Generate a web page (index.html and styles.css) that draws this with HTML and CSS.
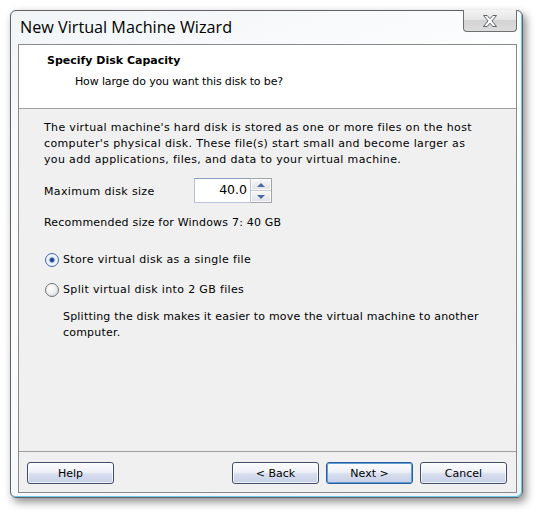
FILE: index.html
```html
<!DOCTYPE html>
<html>
<head>
<meta charset="utf-8">
<link rel="stylesheet" href="styles.css">
</head>
<body>
<div class="window">
  <div class="titlebar">
    <div class="title">New Virtual Machine Wizard</div>
    <div class="close">
      <svg width="18" height="14" viewBox="0 0 18 14">
        <path d="M2.5 1.5 L6.2 1.5 L9 4.7 L11.8 1.5 L15.5 1.5 L11 6.9 L15.5 12.5 L11.8 12.5 L9 9.2 L6.2 12.5 L2.5 12.5 L7 6.9 Z" fill="#fdfdfd" stroke="#5f6367" stroke-width="1" stroke-linejoin="round"/>
      </svg>
    </div>
  </div>
  <div class="panel">
    <div class="header">
      <div class="h-title">Specify Disk Capacity</div>
      <div class="h-sub">How large do you want this disk to be?</div>
    </div>
    <div class="body">
      <p class="intro">The virtual machine's hard disk is stored as one or more files on the host computer's physical disk. These file(s) start small and become larger as you add applications, files, and data to your virtual machine.</p>
      <div class="size-row">
        <div class="size-label">Maximum disk size (in GB):</div>
        <div class="spin">
          <div class="spin-input">40.0</div>
          <div class="spin-btns">
            <div class="spin-btn"><span class="tri-up"></span></div>
            <div class="spin-btn"><span class="tri-down"></span></div>
          </div>
        </div>
      </div>
      <div class="recommend">Recommended size for Windows 7: 40 GB</div>
      <div class="radio-row first"><span class="radio checked"></span>Store virtual disk as a single file</div>
      <div class="radio-row second"><span class="radio"></span>Split virtual disk into 2 GB files</div>
      <p class="desc">Splitting the disk makes it easier to move the virtual machine to another computer.</p>
    </div>
    <div class="footer">
      <button class="btn">Help</button>
      <div class="spacer"></div>
      <button class="btn">&lt; Back</button>
      <button class="btn default">Next &gt;</button>
      <button class="btn">Cancel</button>
    </div>
  </div>
</div>
</body>
</html>
```
FILE: styles.css
```css
html, body {
  margin: 0;
  padding: 0;
  background: #ffffff;
}
body {
  width: 543px;
  height: 518px;
  overflow: hidden;
  font-family: "DejaVu Sans", sans-serif;
  font-size: 11px;
  color: #000;
}
.window {
  margin: 10px 0 0 10px;
  width: 511px;
  height: 486px;
  border: 1px solid #5e6166;
  border-radius: 6px;
  background: linear-gradient(160deg, #f1f5f7 0%, #ffffff 40%, #eef3f6 100%);
  box-shadow: inset -1px -1px 0 #6cc8e6, 3px 4px 9px rgba(0,0,0,0.45);
  display: flex;
  flex-direction: column;
}
.titlebar {
  height: 33px;
  display: flex;
  align-items: flex-start;
  justify-content: space-between;
}
.title {
  font-family: "Open Sans", sans-serif;
  font-size: 16.2px;
  line-height: 20px;
  margin: 6px 0 0 9px;
  color: #000;
}
.close {
  margin: -1px 5px 0 0;
  width: 52px;
  height: 21px;
  border: 1px solid #6d7073;
  border-top: none;
  border-radius: 0 0 4px 4px;
  background: linear-gradient(#f4f4f4 0%, #e6e6e6 45%, #d3d3d3 50%, #dcdcdc 100%);
  display: flex;
  align-items: center;
  justify-content: center;
}
.close svg { display: block; }
.panel {
  margin: 0 5px 0 7px;
  height: 447px;
  border: 1px solid #8a8a8a;
  background: #f0f0f0;
  display: flex;
  flex-direction: column;
}
.header {
  background: #fff;
  border-bottom: 1px solid #a0a0a0;
  padding: 8px 0 0 28px;
  box-sizing: border-box;
  height: 64px;
}
.h-title {
  font-weight: bold;
  line-height: 16px;
}
.h-sub {
  line-height: 16px;
  margin: 5px 0 0 28px;
  letter-spacing: -0.15px;
}
.body {
  flex: 1;
  padding: 11px 30px 0 25px;
  border-bottom: 1px solid #a0a0a0;
  letter-spacing: 0.35px;
}
p { margin: 0; }
.intro {
  line-height: 16px;
}
.size-row {
  display: flex;
  margin-top: 10px;
  height: 25px;
}
.size-label {
  width: 150px;
  box-sizing: border-box;
  padding-top: 6px;
  padding-right: 38px;
  height: 24px;
  line-height: 16px;
  overflow: hidden;
}
.spin {
  display: flex;
  height: 25px;
}
.spin-input {
  width: 57px;
  height: 25px;
  box-sizing: border-box;
  border: 1px solid #b8c2dc;
  border-top-color: #8f9cbd;
  background: #fff;
  text-align: right;
  padding-right: 3px;
  line-height: 22px;
  font-size: 12.5px;
  letter-spacing: 0;
}
.spin-btns {
  width: 21px;
  height: 25px;
  box-sizing: border-box;
  border: 1px solid #a2a4a8;
  border-left: none;
  display: flex;
  flex-direction: column;
  gap: 1px;
  background: #c8cacc;
}
.spin-btn {
  flex: 1;
  background: linear-gradient(#f6f6f6, #e2e3e6);
  border: 1px solid #fbfbfb;
  display: flex;
  align-items: center;
  justify-content: center;
}
.tri-up, .tri-down {
  width: 0;
  height: 0;
  border-left: 4px solid transparent;
  border-right: 4px solid transparent;
}
.tri-up { border-bottom: 4px solid #4e6aa6; }
.tri-down { border-top: 4px solid #4e6aa6; }
.recommend {
  margin-top: 12px;
  line-height: 16px;
  letter-spacing: 0.2px;
}
.radio-row {
  display: flex;
  align-items: center;
  line-height: 16px;
  margin-left: 1px;
}
.radio-row.first { margin-top: 21px; }
.radio-row.second { margin-top: 14px; }
.radio {
  width: 14px;
  height: 14px;
  box-sizing: border-box;
  border-radius: 50%;
  border: 1px solid #6f7478;
  background: radial-gradient(circle at 40% 35%, #ffffff 0%, #f0f0f0 45%, #c9ccd0 100%);
  margin-right: 4px;
}
.radio.checked {
  border-color: #3c6aa8;
  background: radial-gradient(circle at 50% 50%, #1d3a6a 0%, #2c56a0 22%, #dfe9f7 36%, #f4f7fc 60%, #b8c8e0 100%);
}
.desc {
  margin: 11px -12px 0 19px;
  line-height: 16px;
  letter-spacing: 0.2px;
}
.footer {
  height: 40px;
  box-sizing: border-box;
  padding: 10px 9px 0 8px;
  display: flex;
  align-items: flex-start;
}
.spacer { flex: 1; }
.btn {
  width: 87px;
  height: 22px;
  margin: 0 0 0 7px;
  padding: 0;
  border: 1px solid #3f4d6b;
  border-radius: 3px;
  background: linear-gradient(#fbfcfe 0%, #eef1f8 45%, #d8deef 55%, #c9d0e6 100%);
  font-family: "DejaVu Sans", sans-serif;
  font-size: 11px;
  color: #000;
  box-shadow: inset 0 0 0 1px rgba(255,255,255,0.7);
}
.btn:first-child { margin-left: 0; }
.btn.default {
  border-color: #2a5d9c;
  box-shadow: inset 0 0 0 1px #5f9fd8;
}
```
